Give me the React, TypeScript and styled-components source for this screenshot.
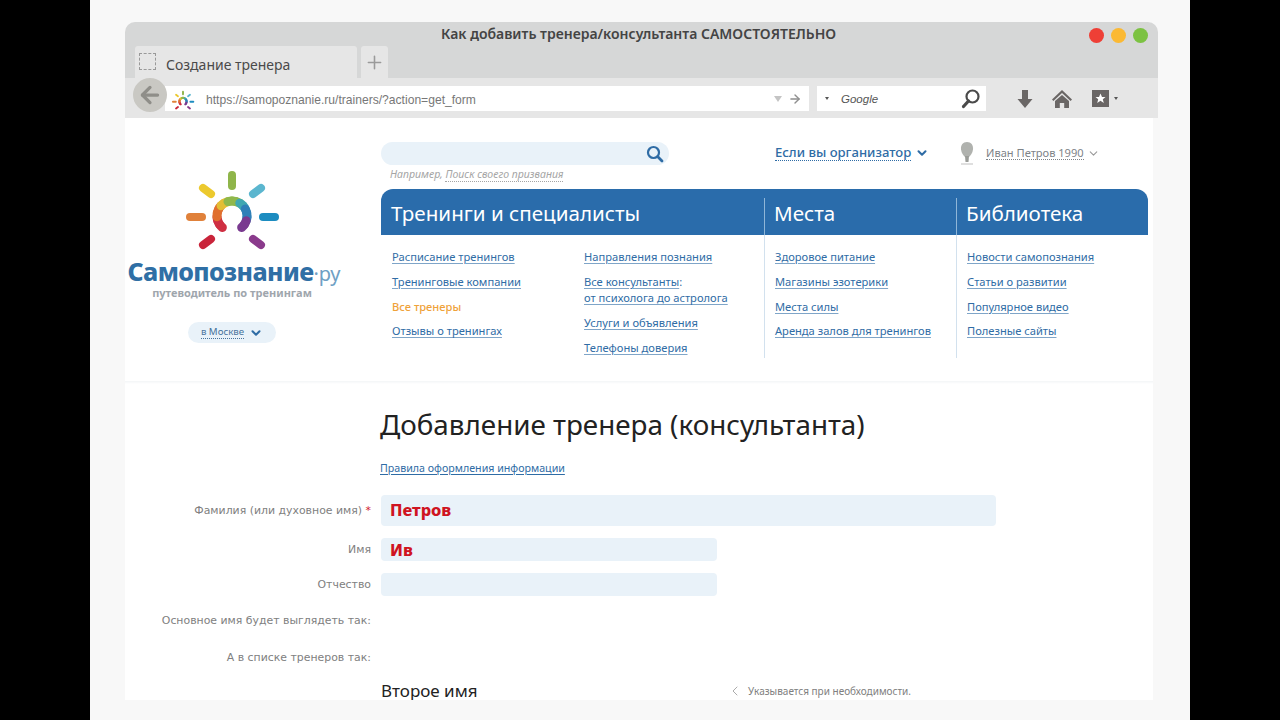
import React from 'react';
import styled, { createGlobalStyle } from 'styled-components';
import { ArrowLeft, ArrowRight, ChevronDown, ChevronLeft, Plus } from 'lucide-react';

const navColumns = [
  {
    title: 'Места',
    links: ['Здоровое питание', 'Магазины эзотерики', 'Места силы', 'Аренда залов для тренингов'],
  },
  {
    title: 'Библиотека',
    links: ['Новости самопознания', 'Статьи о развитии', 'Популярное видео', 'Полезные сайты'],
  },
];

const rays = [
  { d: 'M232 175V186', color: '#8fb54a' },
  { d: 'M203 188L211 194', color: '#ecc92e' },
  { d: 'M261 188L253 194', color: '#5bb6cf' },
  { d: 'M190 217H202', color: '#e0813a' },
  { d: 'M263 217H275', color: '#1c8cc0' },
  { d: 'M203 245L211 239', color: '#c9243a' },
  { d: 'M261 245L253 239', color: '#8a3a8c' },
];

const ringColors = ['#cf2f42', '#e0702f', '#e3be35', '#8fb84c', '#3fa8b2', '#2f80b8', '#7a3a90'];

// the ring runs from lower left over the top to lower right, one short piece per colour step
const ringPieces = Array.from({ length: 18 }, (_, i) => {
  const start = -140 + (i * 280) / 18;
  const end = start + 280 / 18;
  const point = (deg: number) => {
    const rad = (deg * Math.PI) / 180;
    return `${(232 + 15 * Math.sin(rad)).toFixed(2)} ${(216 - 15 * Math.cos(rad)).toFixed(2)}`;
  };
  return {
    d: `M${point(start)}A15 15 0 0 1 ${point(end)}`,
    color: ringColors[Math.floor((i * ringColors.length) / 18)],
  };
});

function Sun({ size }: { size: number }) {
  return (
    <svg width={size} height={size * 0.84} viewBox="182 168 100 84" fill="none">
      {rays.map((ray) => (
        <path key={ray.d} d={ray.d} stroke={ray.color} strokeWidth="8" strokeLinecap="round" />
      ))}
      {ringPieces.map((piece) => (
        <path key={piece.d} d={piece.d} stroke={piece.color} strokeWidth="9" strokeLinecap="round" />
      ))}
    </svg>
  );
}

function App() {
  return (
    <Stage>
      <GlobalStyle />
      <Browser>
        <TitleBar>
          <WindowTitle>Как добавить тренера/консультанта САМОСТОЯТЕЛЬНО</WindowTitle>
          <Dots>
            <Dot color="#ee3f36" />
            <Dot color="#fbb934" />
            <Dot color="#7cc242" />
          </Dots>
          <Tabs>
            <Tab>
              <TabIcon />
              Создание тренера
            </Tab>
            <PlusTab>
              <Plus size={21} strokeWidth={1.8} />
            </PlusTab>
          </Tabs>
        </TitleBar>
        <Toolbar>
          <AddressBar>
            <BackButton>
              <ArrowLeft size={26} strokeWidth={3} />
            </BackButton>
            <Favicon>
              <Sun size={24} />
            </Favicon>
            <Url>https://samopoznanie.ru/trainers/?action=get_form</Url>
            <DropCaret />
            <ArrowRight size={14} color="#8f8f8f" strokeWidth={2.4} />
          </AddressBar>
          <SearchBar>
            <SmallCaret />
            <Engine>Google</Engine>
            <svg width="22" height="22" viewBox="0 0 22 22" fill="none" stroke="#4a4a4a">
              <circle cx="12.5" cy="8.5" r="6" strokeWidth="2.2" />
              <path d="M8.5 13L3.5 18.5" strokeWidth="3.2" strokeLinecap="round" />
            </svg>
          </SearchBar>
          <ToolIcons>
            <svg width="16" height="18" viewBox="0 0 16 18" fill="#6a6665">
              <path d="M5 0H11V9H15.5L8 18L.5 9H5Z" />
            </svg>
            <svg width="20" height="18" viewBox="0 0 20 18" fill="#6a6665">
              <path d="M10 0L20 9.5L18.6 11L10 3L1.4 11L0 9.5Z" />
              <path d="M10 5L17 11V18H12.2V13H7.8V18H3V11Z" />
            </svg>
            <BookmarkGroup>
              <svg width="17" height="17" viewBox="0 0 17 17">
                <rect width="17" height="17" fill="#6a6665" />
                <path
                  d="M8.5 3.5L10 7H13.5L10.8 9.2L11.8 13L8.5 10.8L5.2 13L6.2 9.2L3.5 7H7Z"
                  fill="#fff"
                />
              </svg>
              <SmallCaret />
            </BookmarkGroup>
          </ToolIcons>
        </Toolbar>
        <Page>
          <Header>
            <LogoColumn>
              <Sun size={100} />
              <LogoName>
                Самопознание<LogoSuffix>·ру</LogoSuffix>
              </LogoName>
              <LogoTagline>путеводитель по тренингам</LogoTagline>
              <CityPill>
                <DottedText>в Москве</DottedText>
                <ChevronDown size={14} strokeWidth={3.5} color="#2f6ca5" />
              </CityPill>
            </LogoColumn>
            <HeaderMain>
              <TopRow>
                <SearchColumn>
                  <SiteSearch>
                    <svg width="18" height="18" viewBox="0 0 18 18" fill="none" stroke="#2f6ca5">
                      <circle cx="7.5" cy="7.5" r="5.5" strokeWidth="2.2" />
                      <path d="M11.8 11.8L16 16" strokeWidth="2.8" strokeLinecap="round" />
                    </svg>
                  </SiteSearch>
                  <SearchHint>
                    Например, <DottedText>Поиск своего призвания</DottedText>
                  </SearchHint>
                </SearchColumn>
                <OrganizerLink>
                  <DottedText>Если вы организатор</DottedText>
                  <ChevronDown size={14} strokeWidth={3.5} />
                </OrganizerLink>
                <UserBox>
                  <Avatar>
                    <svg width="16" height="23" viewBox="0 0 16 23">
                      <path d="M8 0C12 0 14.5 3 14 7.5C13.6 11 11.5 13.5 10 15H6C4.5 13.5 2.4 11 2 7.5C1.5 3 4 0 8 0Z" fill="#b0b2ae" />
                      <path d="M6 14H10L9.5 20H6.5Z" fill="#9a9c98" />
                      <path d="M2 22H14" stroke="#d4d4d4" strokeWidth="1.5" />
                    </svg>
                  </Avatar>
                  <DottedText>Иван Петров 1990</DottedText>
                  <ChevronDown size={13} strokeWidth={2} color="#9a9a9a" />
                </UserBox>
              </TopRow>
              <NavHead>
                <NavTitle $width={383}>Тренинги и специалисты</NavTitle>
                <NavTitle $width={192} $divided>
                  Места
                </NavTitle>
                <NavTitle $width={192} $divided>
                  Библиотека
                </NavTitle>
              </NavHead>
              <NavBody>
                <NavColumn $width={192}>
                  <NavLink>Расписание тренингов</NavLink>
                  <NavLink>Тренинговые компании</NavLink>
                  <ActiveLink>Все тренеры</ActiveLink>
                  <NavLink>Отзывы о тренингах</NavLink>
                </NavColumn>
                <NavColumn $width={191}>
                  <NavLink>Направления познания</NavLink>
                  <MultiLine>
                    <div>
                      <NavLink>Все консультанты</NavLink>:
                    </div>
                    <NavLink>от психолога до астролога</NavLink>
                  </MultiLine>
                  <NavLink>Услуги и объявления</NavLink>
                  <NavLink>Телефоны доверия</NavLink>
                </NavColumn>
                {navColumns.map((column) => (
                  <NavColumn key={column.title} $width={192} $divided>
                    {column.links.map((link) => (
                      <NavLink key={link}>{link}</NavLink>
                    ))}
                  </NavColumn>
                ))}
              </NavBody>
            </HeaderMain>
          </Header>
          <Divider />
          <Content>
            <Heading>Добавление тренера (консультанта)</Heading>
            <RulesLink>Правила оформления информации</RulesLink>
            <Form>
              <FormRow $top={18}>
                <Label>
                  Фамилия (или духовное имя) <Required>*</Required>
                </Label>
                <Field $wide>Петров</Field>
              </FormRow>
              <FormRow $top={12}>
                <Label>Имя</Label>
                <Field>Ив</Field>
              </FormRow>
              <FormRow $top={12}>
                <Label>Отчество</Label>
                <Field />
              </FormRow>
              <FormRow $top={15}>
                <Label>Основное имя будет выглядеть так:</Label>
                <EmptyValue />
              </FormRow>
              <FormRow $top={17}>
                <Label>А в списке тренеров так:</Label>
                <EmptyValue />
              </FormRow>
              <FormRow $top={11}>
                <span />
                <SecondName>
                  <SecondTitle>Второе имя</SecondTitle>
                  <Hint>
                    <ChevronLeft size={16} strokeWidth={1} />
                    Указывается при необходимости.
                  </Hint>
                </SecondName>
              </FormRow>
            </Form>
          </Content>
        </Page>
      </Browser>
    </Stage>
  );
}

const GlobalStyle = createGlobalStyle`
  html, body {
    margin: 0;
    height: 720px;
    overflow: hidden;
    background: #000;
  }
`;

const Stage = styled.div`
  box-sizing: border-box;
  width: 1100px;
  height: 720px;
  margin-left: 90px;
  padding: 22px 0 0 35px;
  background: #f8f8f8;
  font-family: 'Noto Sans', sans-serif;
`;

const Browser = styled.div`
  width: 1033px;
`;

const TitleBar = styled.div`
  position: relative;
  height: 56px;
  background: #d6d7d7;
  border-radius: 10px 10px 0 0;
`;

const WindowTitle = styled.div`
  padding-top: 2px;
  height: 20px;
  padding-left: 316px;
  font-size: 14px;
  font-weight: 600;
  line-height: 20px;
  color: #444;
  white-space: nowrap;
`;

const Dots = styled.div`
  position: absolute;
  top: 6px;
  right: 10px;
  display: flex;
  gap: 7px;
`;

const Dot = styled.span<{ color: string }>`
  width: 15px;
  height: 15px;
  border-radius: 50%;
  background: ${(p) => p.color};
`;

const Tabs = styled.div`
  display: flex;
  gap: 4px;
  height: 32px;
  margin-top: 2px;
  padding-left: 10px;
`;

const Tab = styled.div`
  display: flex;
  align-items: center;
  gap: 10px;
  box-sizing: border-box;
  width: 222px;
  padding: 4px 0 0 4px;
  background: #e6e6e6;
  border-radius: 3px 3px 0 0;
  font-size: 14px;
  color: #4a4a4a;
`;

const TabIcon = styled.span`
  width: 15px;
  height: 15px;
  margin-top: -6px;
  border: 1px dashed #999;
`;

const PlusTab = styled.div`
  display: flex;
  align-items: center;
  justify-content: center;
  width: 27px;
  background: #e6e6e6;
  border-radius: 3px 3px 0 0;
  color: #9a9a9a;
`;

const Toolbar = styled.div`
  display: flex;
  align-items: flex-start;
  height: 40px;
  padding-top: 8px;
  box-sizing: border-box;
  background: #e6e6e6;
`;

const AddressBar = styled.div`
  position: relative;
  display: flex;
  align-items: center;
  box-sizing: border-box;
  width: 644px;
  height: 25px;
  margin-left: 40px;
  padding-left: 41px;
  background: #fff;
`;

const BackButton = styled.div`
  position: absolute;
  top: -8px;
  left: -32px;
  display: flex;
  align-items: center;
  justify-content: center;
  width: 34px;
  height: 34px;
  border-radius: 50%;
  background: #c9c8c3;
  color: #8f8e89;
`;

const Favicon = styled.span`
  position: absolute;
  top: 4px;
  left: 6px;
  display: flex;
`;

const Url = styled.span`
  width: 568px;
  padding-top: 2px;
  font-family: 'Liberation Sans', sans-serif;
  font-size: 12.1px;
  color: #777;
`;

const DropCaret = styled.span`
  width: 0;
  height: 0;
  margin-right: 6px;
  border-left: 4.5px solid transparent;
  border-right: 4.5px solid transparent;
  border-top: 6px solid #c4c4c4;
`;

const SmallCaret = styled.span`
  width: 0;
  height: 0;
  border-left: 2.5px solid transparent;
  border-right: 2.5px solid transparent;
  border-top: 3px solid #555;
`;

const SearchBar = styled.div`
  display: flex;
  align-items: center;
  box-sizing: border-box;
  width: 169px;
  height: 25px;
  margin-left: 8px;
  padding: 0 4px 0 8px;
  background: #fff;
`;

const Engine = styled.span`
  flex: 1;
  padding: 1px 0 0 12px;
  font-family: 'Liberation Sans', sans-serif;
  font-size: 11.5px;
  font-style: italic;
  color: #555;
`;

const ToolIcons = styled.div`
  display: flex;
  align-items: center;
  gap: 19px;
  height: 25px;
  margin-left: 31px;
`;

const BookmarkGroup = styled.div`
  display: flex;
  align-items: center;
  gap: 5px;
  margin-left: 1px;
`;

const Page = styled.div`
  width: 1028px;
  height: 582px;
  overflow: hidden;
  background: #fff;
`;

const Header = styled.div`
  display: flex;
  height: 263px;
`;

const LogoColumn = styled.div`
  display: flex;
  flex-direction: column;
  align-items: center;
  box-sizing: border-box;
  width: 256px;
  padding: 50px 42px 0 0;
`;

const LogoName = styled.div`
  margin: 4px 0 0 4px;
  font-size: 25px;
  font-weight: 800;
  line-height: 30px;
  letter-spacing: -0.6px;
  color: #2f6fa5;
  white-space: nowrap;
`;

const LogoSuffix = styled.span`
  font-size: 20px;
  font-weight: 400;
  letter-spacing: 0;
  color: #6fa0c4;
`;

const LogoTagline = styled.div`
  margin-top: -3px;
  font-size: 11px;
  font-weight: 700;
  line-height: 14px;
  color: #9fa6ad;
  white-space: nowrap;
`;

const CityPill = styled.div`
  display: flex;
  align-items: center;
  gap: 5px;
  margin-top: 22px;
  padding: 0 13px;
  height: 21px;
  border-radius: 11px;
  background: #e9f2f9;
  font-size: 9.7px;
  color: #47739c;
  white-space: nowrap;
`;

const DottedText = styled.span`
  border-bottom: 1px dotted currentColor;
  line-height: 1.15;
`;

const HeaderMain = styled.div`
  width: 767px;
`;

const TopRow = styled.div`
  display: flex;
  align-items: flex-start;
  height: 71px;
  padding-top: 24px;
  box-sizing: border-box;
`;

const SearchColumn = styled.div`
  width: 394px;
`;

const SiteSearch = styled.div`
  display: flex;
  align-items: center;
  justify-content: flex-end;
  box-sizing: border-box;
  width: 288px;
  height: 23px;
  padding-right: 5px;
  border-radius: 12px;
  background: #e9f2f9;
`;

const SearchHint = styled.div`
  margin: 2px 0 0 9px;
  font-size: 10.55px;
  font-style: italic;
  color: #a5a5a5;
`;

const OrganizerLink = styled.div`
  display: flex;
  align-items: center;
  gap: 4px;
  width: 184px;
  margin-top: 3px;
  font-size: 13.1px;
  font-weight: 500;
  color: #2f6ca5;
`;

const UserBox = styled.div`
  display: flex;
  align-items: center;
  gap: 3px;
  font-size: 11.1px;
  color: #7e8388;
`;

const Avatar = styled.span`
  display: flex;
  margin-right: 8px;
`;

const NavHead = styled.div`
  display: flex;
  height: 46px;
  border-radius: 12px 12px 0 0;
  background: #2a6cab;
`;

const NavTitle = styled.div<{ $width: number; $divided?: boolean }>`
  box-sizing: border-box;
  width: ${(p) => p.$width}px;
  padding: 9px 0 0 10px;
  font-size: 20.6px;
  line-height: 30px;
  color: #fff;
  ${(p) => p.$divided && 'background: linear-gradient(#8fb6d8, #8fb6d8) left 9px / 1px 100% no-repeat;'}
`;

const NavBody = styled.div`
  display: flex;
  height: 123px;
`;

const NavColumn = styled.div<{ $width: number; $divided?: boolean }>`
  display: flex;
  flex-direction: column;
  align-items: flex-start;
  gap: 8.3px;
  box-sizing: border-box;
  width: ${(p) => p.$width}px;
  padding: 14px 0 0 11px;
  ${(p) => p.$divided && 'border-left: 1px solid #d2e1ee; padding-left: 10px;'}
`;

const NavLink = styled.span`
  font-size: 11.15px;
  line-height: 16.5px;
  color: #2f6ca5;
  text-decoration: underline;
  text-decoration-color: #7fa5c8;
  text-underline-offset: 2px;
  text-decoration-thickness: 1px;
  white-space: nowrap;
`;

const ActiveLink = styled.span`
  font-size: 11.15px;
  font-weight: 500;
  line-height: 16.5px;
  color: #efa23a;
`;

const MultiLine = styled.div`
  font-size: 11.15px;
  line-height: 16.5px;
  color: #2f6ca5;
`;

const Divider = styled.div`
  height: 3px;
  background: linear-gradient(#f3f5f7, #fff);
`;

const Content = styled.div`
  padding-left: 255px;
`;

const Heading = styled.h1`
  margin: 21px 0 0 0;
  font-size: 27.8px;
  font-weight: 400;
  line-height: 38px;
  color: #222;
  white-space: nowrap;
`;

const RulesLink = styled.div`
  display: inline-block;
  margin-top: 18px;
  font-size: 10.66px;
  line-height: 15px;
  color: #2f6ca5;
  text-decoration: underline;
  text-underline-offset: 2px;
`;

const Form = styled.div`
  margin-left: -255px;
`;

const FormRow = styled.div<{ $top: number }>`
  display: grid;
  grid-template-columns: 246px 1fr;
  column-gap: 10px;
  align-items: center;
  margin-top: ${(p) => p.$top}px;
`;

const Label = styled.div`
  font-family: 'DejaVu Sans', sans-serif;
  font-size: 10.9px;
  line-height: 16px;
  color: #808080;
  text-align: right;
  white-space: nowrap;
`;

const Required = styled.span`
  color: #d0202a;
`;

const Field = styled.div<{ $wide?: boolean }>`
  box-sizing: border-box;
  width: ${(p) => (p.$wide ? 615 : 336)}px;
  height: ${(p) => (p.$wide ? 31 : 23)}px;
  padding-left: 9px;
  border-radius: 4px;
  background: #e9f2f9;
  font-size: 16.4px;
  font-weight: 800;
  line-height: ${(p) => (p.$wide ? 30 : 23)}px;
  color: #cf1421;
`;

const EmptyValue = styled.div`
  height: 20px;
`;

const SecondName = styled.div`
  display: flex;
  align-items: center;
`;

const SecondTitle = styled.div`
  width: 346px;
  font-size: 17px;
  line-height: 24px;
  color: #222;
`;

const Hint = styled.div`
  display: flex;
  align-items: center;
  gap: 5px;
  font-size: 10px;
  color: #808080;
  white-space: nowrap;
`;

export default App;
